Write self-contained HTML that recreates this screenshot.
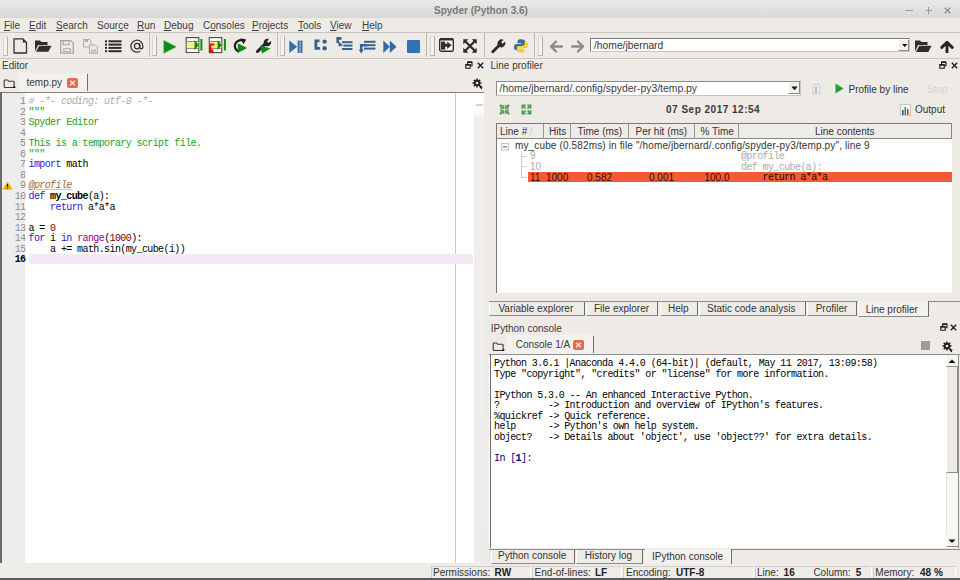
<!DOCTYPE html>
<html><head><meta charset="utf-8">
<style>
*{margin:0;padding:0;box-sizing:border-box}
html,body{width:960px;height:580px;overflow:hidden;background:#eeebe7;font-family:"Liberation Sans",sans-serif;font-size:10px;color:#3c3c3c}
.a{position:absolute;white-space:pre}
.m{font-family:"Liberation Mono",monospace;font-size:10px;letter-spacing:-0.6px}
#title{left:0;top:0;width:960px;height:18px;background:linear-gradient(#e9e9e8,#d8d8d6)}
#menubar{left:0;top:18px;width:960px;height:14px;background:#eeebe7}
.menu{top:21px;font-size:10px;color:#3c3c3c;line-height:10px}
.menu u{text-decoration:underline;text-underline-offset:1px}
#tbline{left:0;top:32px;width:960px;height:1px;background:#c9c6c2}
#toolbar{left:0;top:33px;width:960px;height:24px;background:#eeebe7}
#tbline2{left:0;top:57.6px;width:960px;height:1px;background:#c9c6c2}
.handle{width:5px;height:19.5px;border-left:1px solid #d8d6d2;border-right:1.5px solid #b0aeaa;border-bottom:1px solid #b8b6b2;border-top:1px solid #e0deda;background:#f4f3f1;top:36px}
.sep{width:1px;height:24px;background:#bcbab6;top:33px}
.th{font-size:10px;line-height:10px;color:#333;margin-top:0.7px}
.tab{top:302px;height:14px;background:#eeece9;border-right:1px solid #6e6c68;border-bottom:1px solid #8e8c88;border-left:1px solid #fff}
.tab2{top:549.5px;height:14px;background:#eeece9;border-right:1px solid #6e6c68;border-bottom:1px solid #8e8c88;border-left:1px solid #fff}
.ttx{font-size:10px;line-height:10px;color:#333;margin-top:0.8px}
.sb{top:566px;height:12px;border-left:1px solid #d2cfca;border-top:1px solid #d2cfca;border-right:1px solid #fbfaf9}
.stx{top:568px;font-size:10px;line-height:10px;color:#333}
.b{font-weight:bold;color:#222}
.ptitle{font-size:10px;color:#3c3c3c}
</style></head><body>
<div id="title" class="a"></div>
<div class="a" style="left:434px;top:6px;font-weight:bold;color:#7a7a7a;font-size:10px;line-height:10px">Spyder (Python 3.6)</div>
<div class="a" style="left:904.5px;top:10.3px;width:8.5px;height:1.2px;background:#a0a0a0"></div>
<div class="a" style="left:925.5px;top:10.2px;width:6.5px;height:1.2px;background:#9a9a9a"></div>
<div class="a" style="left:928.1px;top:7.2px;width:1.2px;height:6.5px;background:#9a9a9a"></div>
<svg class="a" style="left:943.5px;top:6.8px" width="7" height="7"><path d="M0.7 0.7L6.3 6.3M6.3 0.7L0.7 6.3" stroke="#8e8e8e" stroke-width="1.3"/></svg>

<div id="menubar" class="a"></div>
<div class="a menu" style="left:4px"><u>F</u>ile</div>
<div class="a menu" style="left:29px"><u>E</u>dit</div>
<div class="a menu" style="left:56px"><u>S</u>earch</div>
<div class="a menu" style="left:97px">Sour<u>c</u>e</div>
<div class="a menu" style="left:137px"><u>R</u>un</div>
<div class="a menu" style="left:164px"><u>D</u>ebug</div>
<div class="a menu" style="left:203px">C<u>o</u>nsoles</div>
<div class="a menu" style="left:252px"><u>P</u>rojects</div>
<div class="a menu" style="left:298px"><u>T</u>ools</div>
<div class="a menu" style="left:330px"><u>V</u>iew</div>
<div class="a menu" style="left:362px"><u>H</u>elp</div>
<div id="tbline" class="a"></div>
<div id="toolbar" class="a"></div>
<div id="tbline2" class="a"></div>



<!-- ===== TOOLBAR ICONS ===== -->
<div class="a handle" style="left:2.5px"></div>
<div class="a handle" style="left:152px"></div>
<div class="a handle" style="left:279.5px"></div>
<div class="a handle" style="left:429.5px"></div>
<div class="a handle" style="left:537.5px"></div>
<div class="a sep" style="left:149px"></div>
<div class="a sep" style="left:277px"></div>
<div class="a sep" style="left:426px"></div>
<div class="a sep" style="left:484px"></div>
<div class="a sep" style="left:534px"></div>
<!-- new file -->
<svg class="a" style="left:13px;top:38px" width="15" height="16"><path d="M1 0.8h8.8l3.7 3.7v10.5h-12.5z" fill="none" stroke="#333" stroke-width="1.3" stroke-linejoin="round"/><path d="M9.8 0.8l3.7 3.7h-3.7z" fill="#333"/></svg>
<!-- open -->
<svg class="a" style="left:35px;top:39.5px" width="17" height="12"><path d="M0 0.5h5l1.5 1.5h6v3h-9.5l-3 6.5z" fill="#2e2e2e"/><path d="M4.2 5.8h12.3l-3.2 6h-12.3z" fill="#2e2e2e"/></svg>
<!-- save (disabled) -->
<svg class="a" style="left:60px;top:39.5px" width="14" height="14"><path d="M0.7 0.7h10l2.6 2.6v9.9h-12.6z" fill="none" stroke="#a4a4a4" stroke-width="1.2"/><rect x="3" y="0.7" width="6" height="4" fill="none" stroke="#a4a4a4" stroke-width="1"/><rect x="3" y="8" width="8" height="4.5" fill="#b8b8b8"/><rect x="4.5" y="9" width="5" height="2" fill="#e8e8e8"/></svg>
<!-- save all (disabled) -->
<svg class="a" style="left:82.5px;top:38.5px" width="15" height="15"><path d="M0.5 0.5h6l1.5 1.5v6h-7.5z" fill="#eceae7" stroke="#acacac" stroke-width="1"/><rect x="2" y="1" width="3" height="2" fill="#b0b0b0"/><path d="M6.5 6h6l1.8 1.8v6.5h-7.8z" fill="#eceae7" stroke="#acacac" stroke-width="1"/><rect x="8" y="10.5" width="5" height="3" fill="#c0c0c0"/></svg>
<!-- list -->
<svg class="a" style="left:105px;top:39.5px" width="17" height="13"><g fill="#2a2a2a"><rect x="0" y="0.3" width="2" height="2"/><rect x="0" y="3.6" width="2" height="2"/><rect x="0" y="6.9" width="2" height="2"/><rect x="0" y="10.2" width="2" height="2"/><rect x="3.5" y="0.3" width="13" height="2"/><rect x="3.5" y="3.6" width="13" height="2"/><rect x="3.5" y="6.9" width="13" height="2"/><rect x="3.5" y="10.2" width="13" height="2"/></g></svg>
<!-- @ -->
<svg class="a" style="left:129.5px;top:39px" width="14" height="14"><path d="M10.2 12.2A6 6 0 1 1 12.9 7.2c0 1.6-0.7 2.6-1.8 2.6c-1 0-1.3-0.7-1.3-1.6V4.2" fill="none" stroke="#333" stroke-width="1.25"/><ellipse cx="7" cy="7.1" rx="2.6" ry="2.8" fill="none" stroke="#333" stroke-width="1.25"/></svg>
<!-- run -->
<svg class="a" style="left:163px;top:39.5px" width="14" height="14"><path d="M0.8 0.5L13.2 6.8L0.8 13.2z" fill="#118a11" stroke="#3ab53a" stroke-width="0.6"/></svg>
<!-- run cell -->
<svg class="a" style="left:185px;top:37px" width="18" height="16"><rect x="1.2" y="0.6" width="12.6" height="15" fill="#fff" stroke="#464646" stroke-width="1.1"/><rect x="1.8" y="4.6" width="11.5" height="7" fill="#f6f08a"/><path d="M1.2 4.5h12.6M1.2 11.6h12.6" stroke="#7a7050" stroke-width="0.8"/><path d="M9.5 3L13.8 8.1L9.5 13.2z" fill="#0e8e0e"/><rect x="15.4" y="2" width="2" height="11.5" fill="#0e8e0e"/></svg>
<!-- run cell advance -->
<svg class="a" style="left:208px;top:37px" width="19" height="17"><rect x="1.3" y="0.6" width="12.5" height="15" fill="#fff" stroke="#464646" stroke-width="1.1"/><rect x="1.9" y="4.6" width="11.4" height="7" fill="#f6f08a"/><path d="M1.3 4.5h12.5M1.3 11.6h12.5" stroke="#7a7050" stroke-width="0.8"/><path d="M9.5 3L13.8 8.1L9.5 13.2z" fill="#0e8e0e"/><rect x="15.9" y="2" width="2" height="11.5" fill="#0e8e0e"/><path d="M6.5 7.5h-4.3v6" fill="none" stroke="#e80c0c" stroke-width="2.2"/><circle cx="3.5" cy="14.2" r="2" fill="#e80c0c"/></svg>
<!-- rerun -->
<svg class="a" style="left:233px;top:38px" width="15" height="16"><path d="M9.8 2.6A5.6 5.6 0 1 0 5.5 13.4" fill="none" stroke="#1e1a1e" stroke-width="2.2"/><path d="M7.5 0.3L13.2 1.5L10.5 6.2z" fill="#1e1a1e"/><path d="M4.8 5.2L14.2 10L4.8 15z" fill="#0c8a0c"/></svg>
<!-- configure -->
<svg class="a" style="left:256px;top:38px" width="16" height="16"><path d="M1.5 13.5L8.5 6.5" stroke="#222" stroke-width="3" stroke-linecap="round"/><path d="M8 6.5A4 4 0 0 1 13 1L11 3.5L12.5 5L15 3A4 4 0 0 1 9.5 8z" fill="#222"/><path d="M4 7.5L14.5 10.5L6 15.5z" fill="#108a10"/></svg>
<!-- debug -->
<svg class="a" style="left:288.5px;top:39.5px" width="14" height="14"><path d="M0.3 0.5L8.2 6.8L0.3 13z" fill="#3470a8"/><rect x="8.6" y="0.5" width="2.1" height="12.5" fill="#3470a8"/><rect x="11.4" y="0.5" width="2.1" height="12.5" fill="#3470a8"/></svg>
<!-- step -->
<svg class="a" style="left:313.5px;top:39px" width="14" height="12"><path d="M5.5 1.8h-3.6v7.6h4.2" fill="none" stroke="#36628f" stroke-width="2.8"/><circle cx="10.6" cy="2.6" r="2.2" fill="#36628f"/><circle cx="10.6" cy="9.2" r="2.2" fill="#36628f"/></svg>
<!-- step into -->
<svg class="a" style="left:335.5px;top:36.5px" width="17" height="14"><path d="M5.5 1.4h-3.8v4.6" fill="none" stroke="#36628f" stroke-width="2.6"/><path d="M1.5 3.5L7.2 8.5L3 9.5z" fill="#36628f"/><rect x="6" y="4.2" width="10.5" height="2" fill="#36628f"/><rect x="7.5" y="7.6" width="9" height="2" fill="#36628f"/><rect x="6" y="11" width="10.5" height="2" fill="#36628f"/></svg>
<!-- step return -->
<svg class="a" style="left:358.5px;top:40px" width="17" height="14"><rect x="5" y="0.8" width="11.5" height="2" fill="#36628f"/><rect x="6.5" y="4.2" width="10" height="2" fill="#36628f"/><rect x="5" y="7.6" width="11.5" height="2" fill="#36628f"/><path d="M8 5.2h-5.8v5.8" fill="none" stroke="#36628f" stroke-width="2.6"/><path d="M-0.2 9.8h4.8l-2.4 3.8z" fill="#36628f"/></svg>
<!-- continue -->
<svg class="a" style="left:382.5px;top:39.5px" width="14" height="14"><path d="M0.3 0.5L6.8 6.8L0.3 13z" fill="#2f6aa8"/><path d="M6.8 0.5L13.5 6.8L6.8 13z" fill="#2f6aa8"/></svg>
<!-- stop -->
<div class="a" style="left:406.5px;top:39.8px;width:13.2px;height:13px;background:#2f73b8;border-radius:1px"></div>
<!-- maximize -->
<svg class="a" style="left:439px;top:38px" width="15" height="14"><rect x="0.7" y="0.7" width="13.6" height="12.6" rx="1.6" fill="#fff" stroke="#2e2e2e" stroke-width="1.4"/><rect x="0.7" y="0.7" width="13.6" height="1.8" fill="#2e2e2e"/><rect x="2" y="3.6" width="4.2" height="8" fill="#2e2e2e"/><path d="M5.5 5.8h2.7v-2.3l4.5 3.8l-4.5 3.8v-2.3h-2.7z" fill="#2e2e2e"/></svg>
<!-- fullscreen -->
<svg class="a" style="left:463px;top:39px" width="14" height="14"><path d="M2 2L12 12M12 2L2 12" stroke="#2a2a2a" stroke-width="2.2"/><path d="M0.3 0.3h5l-5 5z M13.7 0.3h-5l5 5z M0.3 13.7h5l-5 -5z M13.7 13.7h-5l5 -5z" fill="#2a2a2a"/></svg>
<!-- wrench -->
<svg class="a" style="left:491px;top:39px" width="15" height="15"><path d="M1.8 12.8L8 6.6" stroke="#2a2a2a" stroke-width="2.8" stroke-linecap="round"/><path d="M7 6.8A4.3 4.3 0 0 1 12.5 0.8L10.2 3.2L11.7 4.8L14.1 2.5A4.3 4.3 0 0 1 8.3 8z" fill="#2a2a2a"/></svg>
<!-- python -->
<svg class="a" style="left:514px;top:39px" width="14" height="14"><path d="M6.8 0.3c-3 0-3.3 1.3-3.3 2.4v1.6h3.5v0.6h-4.8c-1.4 0-2.2 1.2-2.2 3.2c0 2.1 0.9 3.2 2.2 3.2h1.2v-1.8c0-1.4 1.1-2.4 2.4-2.4h3.4c1.1 0 2-0.9 2-2v-2.4c0-1.2-1-2.2-2.2-2.3c-0.7-0.1-1.4-0.1-2.2-0.1z" fill="#3a6fa5"/><path d="M7.2 13.7c3 0 3.3-1.3 3.3-2.4v-1.6h-3.5v-0.6h4.8c1.4 0 2.2-1.2 2.2-3.2c0-2.1-0.9-3.2-2.2-3.2h-1.2v1.8c0 1.4-1.1 2.4-2.4 2.4h-3.4c-1.1 0-2 0.9-2 2v2.4c0 1.2 1 2.2 2.2 2.3c0.7 0.1 1.4 0.1 2.2 0.1z" fill="#f5cf3a"/></svg>
<!-- back / forward -->
<svg class="a" style="left:548.5px;top:40px" width="14" height="14"><path d="M13 6.5H3M7 1.5L2 6.5L7 11.5" fill="none" stroke="#8c8c8c" stroke-width="2.4" stroke-linecap="round" stroke-linejoin="round"/></svg>
<svg class="a" style="left:571px;top:40px" width="14" height="14"><path d="M1 6.5H11M7 1.5L12 6.5L7 11.5" fill="none" stroke="#8c8c8c" stroke-width="2.4" stroke-linecap="round" stroke-linejoin="round"/></svg>
<!-- path combo -->
<div class="a" style="left:590px;top:38.2px;width:320px;height:14px;background:#fff;border:1px solid #8c8a86;border-top:1.5px solid #7c7a76;border-left:1.5px solid #7c7a76;border-right-color:#c8c6c2;border-bottom-color:#c8c6c2"></div>
<div class="a" style="left:594px;top:41.3px;font-size:10.3px;line-height:10px;color:#333">/home/jbernard</div>
<div class="a" style="left:898px;top:39.5px;width:11px;height:11.5px;background:#f2f0ed;border-left:1px solid #fff;border-right:1px solid #8c8a86;border-bottom:1.5px solid #8c8a86"></div>
<svg class="a" style="left:901.5px;top:44px" width="6" height="4"><path d="M0 0h5.5l-2.75 3z" fill="#111"/></svg>
<svg class="a" style="left:915px;top:39.5px" width="17" height="13"><path d="M0 0.5h5l1.5 1.5h6v3h-9.5l-3 6.5z" fill="#2e2e2e"/><path d="M4.2 5.8h12.3l-3.2 6.2h-12.3z" fill="#2e2e2e"/></svg>
<svg class="a" style="left:939.5px;top:40px" width="14" height="13"><path d="M7 12.3V2.8M1.8 7.4L7 2.2L12.2 7.4" fill="none" stroke="#262626" stroke-width="2.9" stroke-linecap="round" stroke-linejoin="round"/></svg>

<!-- ===== EDITOR PANE ===== -->
<div class="a ptitle" style="left:2px;top:61px;line-height:10px">Editor</div>
<svg class="a" style="left:465px;top:61px" width="8" height="8"><path d="M2.6 4.5V1h4.4v3.8h-1.5" fill="none" stroke="#1a1a1a" stroke-width="1.1"/><rect x="2.6" y="0.5" width="4.4" height="1.5" fill="#1a1a1a"/><path d="M0.8 7.2V3.5h4.4v3.7z" fill="none" stroke="#1a1a1a" stroke-width="1.1"/><rect x="0.8" y="3" width="4.4" height="1.6" fill="#1a1a1a"/></svg>
<svg class="a" style="left:477px;top:62px" width="7" height="7"><path d="M0.8 0.8L6.2 6.2M6.2 0.8L0.8 6.2" stroke="#1a1a1a" stroke-width="1.3"/></svg>
<!-- tab bar -->
<svg class="a" style="left:3px;top:79px" width="13" height="9"><path d="M1.2 1h3.3l1.2 1.3h4.6q0.8 0 0.8 0.8v4.6q0 0.8-0.8 0.8h-8.3q-0.8 0-0.8-0.8v-5.9q0-0.8 0.8-0.8z" fill="none" stroke="#3a3a3a" stroke-width="1.1"/><rect x="10.3" y="7.3" width="2" height="1.7" fill="#111"/></svg>
<div class="a" style="left:19px;top:73px;width:68px;height:19px;background:#f3f1ee"></div>
<div class="a" style="left:87px;top:74px;width:1px;height:17px;background:#6e6e6e"></div>
<div class="a" style="left:26.5px;top:77.5px;line-height:10px;font-size:10px;color:#3a3a3a">temp.py</div>
<svg class="a" style="left:66.5px;top:77.5px" width="11" height="10"><rect x="0" y="0" width="11" height="10" rx="2" fill="#e46c4c"/><path d="M3.2 2.7L7.8 7.3M7.8 2.7L3.2 7.3" stroke="#fbe8e2" stroke-width="1.5"/></svg>
<svg class="a" style="left:472px;top:78px" width="12" height="12"><path d="M9.53 4.19L9.53 5.81L8.22 5.71L7.78 6.78L8.77 7.63L7.63 8.77L6.78 7.78L5.71 8.22L5.81 9.53L4.19 9.53L4.29 8.22L3.22 7.78L2.37 8.77L1.23 7.63L2.22 6.78L1.78 5.71L0.47 5.81L0.47 4.19L1.78 4.29L2.22 3.22L1.23 2.37L2.37 1.23L3.22 2.22L4.29 1.78L4.19 0.47L5.81 0.47L5.71 1.78L6.78 2.22L7.63 1.23L8.77 2.37L7.78 3.22L8.22 4.29z" fill="#1e1e1e"/><circle cx="5" cy="5" r="1.3" fill="#eeebe7"/><path d="M7.5 9.2L10.5 8.5L9.8 11.5z" fill="#111"/><path d="M7.5 7.5L9.5 9.5" stroke="#111" stroke-width="1.2"/></svg>
<div class="a" style="left:0;top:91.6px;width:484px;height:1.8px;background:#817f7b"></div>
<!-- editor frame -->
<div class="a" style="left:0;top:93px;width:484px;height:470px;background:#fff"></div>
<div class="a" style="left:0;top:92px;width:1.5px;height:471px;background:#6a6a6a"></div>
<div class="a" style="left:1.5px;top:93px;width:23.5px;height:470px;background:#ededed"></div>
<div class="a" style="left:455px;top:93px;width:1px;height:470px;background:#c9c9c9"></div>
<div class="a" style="left:474px;top:93px;width:10px;height:470px;background:linear-gradient(#fff 0,#fdfdfd 18px,#eeeeee 26px,#ececec 100%)"></div>
<div class="a" style="left:476px;top:104px;width:7px;height:2px;background:#efc9a4"></div>
<div class="a" style="left:28.5px;top:253.7px;width:444px;height:10px;background:#f6e9f6"></div>
<svg class="a" style="left:2px;top:180.5px" width="11" height="9"><path d="M5.5 0.5L10.5 8.5H0.5z" fill="#f0a800"/><path d="M5.5 3v3" stroke="#222" stroke-width="1.1"/><rect x="5" y="6.8" width="1" height="1" fill="#222"/></svg>
<div class="a m" id="lnum" style="left:2px;top:97.2px;width:23.5px;text-align:right;line-height:10.53px;color:#8f8f8f">1
2
3
4
5
6
7
8
9
10
11
12
13
14
15
<b style="color:#000">16</b></div>
<div class="a m" id="code" style="left:28.5px;top:97.2px;line-height:10.53px;color:#000"><i style="color:#ababab"># -*- coding: utf-8 -*-</i>
<span style="color:#1ea01e">"""</span>
<span style="color:#1ea01e">Spyder Editor</span>

<span style="color:#1ea01e">This is a temporary script file.</span>
<span style="color:#1ea01e">"""</span>
<span style="color:#1c1cd8">import</span> math

<i style="color:#9a6a30;text-decoration:underline;text-decoration-color:#f3b870">@profile</i>
<span style="color:#1c1cd8">def</span> <b>my_cube</b>(a):
    <span style="color:#1c1cd8">return</span> a*a*a

a = <span style="color:#800000">0</span>
<span style="color:#1c1cd8">for</span> i <span style="color:#1c1cd8">in</span> <span style="color:#900090">range</span>(<span style="color:#800000">1000</span>):
    a += math.sin(my_cube(i))
</div>
<!-- splitter -->


<!-- ===== LINE PROFILER PANE ===== -->
<div class="a ptitle" style="left:490.5px;top:61px;line-height:10px">Line profiler</div>
<svg class="a" style="left:939px;top:61px" width="8" height="8"><path d="M2.6 4.5V1h4.4v3.8h-1.5" fill="none" stroke="#1a1a1a" stroke-width="1.1"/><rect x="2.6" y="0.5" width="4.4" height="1.5" fill="#1a1a1a"/><path d="M0.8 7.2V3.5h4.4v3.7z" fill="none" stroke="#1a1a1a" stroke-width="1.1"/><rect x="0.8" y="3" width="4.4" height="1.6" fill="#1a1a1a"/></svg>
<svg class="a" style="left:951px;top:62px" width="7" height="7"><path d="M0.8 0.8L6.2 6.2M6.2 0.8L0.8 6.2" stroke="#1a1a1a" stroke-width="1.3"/></svg>
<!-- combo -->
<div class="a" style="left:496px;top:80.5px;width:305px;height:15px;background:#fff;border:1px solid #8c8a86;border-right-color:#c8c6c2;border-bottom-color:#c8c6c2"></div>
<div class="a" style="left:499.5px;top:83px;font-size:10.4px;line-height:12px;color:#3a3a3a">/home/jbernard/.config/spyder-py3/temp.py</div>
<div class="a" style="left:788px;top:82px;width:12px;height:12px;background:#f2f0ed;border-left:1px solid #fff;border-right:1px solid #8c8a86;border-bottom:1px solid #8c8a86"></div>
<svg class="a" style="left:791px;top:86px" width="7" height="5"><path d="M0.5 0.5h6l-3 4z" fill="#111"/><rect x="0" y="4" width="7" height="1" fill="#fff"/></svg>
<svg class="a" style="left:810px;top:82px" width="13" height="13"><path d="M4 2h5v2l1 1v7h-7v-7l1-1z" fill="#e6e9ee" stroke="#c4c8d0" stroke-width="0.8"/><path d="M6 5v6" stroke="#8aa0c8" stroke-width="1.2"/></svg>
<svg class="a" style="left:835px;top:83px" width="9" height="11"><path d="M0.5 0.5L8.5 5.5L0.5 10.5z" fill="#20a030"/></svg>
<div class="a" style="left:848.5px;top:84.7px;font-size:10px;line-height:10px;color:#333">Profile by line</div>
<div class="a" style="left:927px;top:84.7px;font-size:10px;line-height:10px;color:#d6d3ce">Stop</div>
<!-- row 2 -->
<svg class="a" style="left:498.5px;top:104px" width="11" height="11"><rect x="4.7" y="0.5" width="1.6" height="10" fill="#d2f2cc"/><rect x="0.5" y="4.7" width="10" height="1.6" fill="#d2f2cc"/><path d="M0.5 1.5L2 0.5L4.2 2.7V1.2H4.8V4.8H1.2V4.2H2.7z" fill="#5a955a" stroke="#5a955a" stroke-width="0.5" transform=""/><path d="M0.5 1.5L2 0.5L4.2 2.7V1.2H4.8V4.8H1.2V4.2H2.7z" fill="#5a955a" stroke="#5a955a" stroke-width="0.5" transform="translate(11 0) scale(-1 1)"/><path d="M0.5 1.5L2 0.5L4.2 2.7V1.2H4.8V4.8H1.2V4.2H2.7z" fill="#5a955a" stroke="#5a955a" stroke-width="0.5" transform="translate(0 11) scale(1 -1)"/><path d="M0.5 1.5L2 0.5L4.2 2.7V1.2H4.8V4.8H1.2V4.2H2.7z" fill="#5a955a" stroke="#5a955a" stroke-width="0.5" transform="translate(11 11) scale(-1 -1)"/></svg>
<svg class="a" style="left:520.5px;top:104px" width="11" height="11"><rect x="4.7" y="0.5" width="1.6" height="10" fill="#d2f2cc"/><rect x="0.5" y="4.7" width="10" height="1.6" fill="#d2f2cc"/><path d="M0.8 0.8H4.4V1.8H2.9L4.8 3.7L3.7 4.8L1.8 2.9V4.4H0.8z" fill="#5a955a" stroke="#5a955a" stroke-width="0.5" transform=""/><path d="M0.8 0.8H4.4V1.8H2.9L4.8 3.7L3.7 4.8L1.8 2.9V4.4H0.8z" fill="#5a955a" stroke="#5a955a" stroke-width="0.5" transform="translate(11 0) scale(-1 1)"/><path d="M0.8 0.8H4.4V1.8H2.9L4.8 3.7L3.7 4.8L1.8 2.9V4.4H0.8z" fill="#5a955a" stroke="#5a955a" stroke-width="0.5" transform="translate(0 11) scale(1 -1)"/><path d="M0.8 0.8H4.4V1.8H2.9L4.8 3.7L3.7 4.8L1.8 2.9V4.4H0.8z" fill="#5a955a" stroke="#5a955a" stroke-width="0.5" transform="translate(11 11) scale(-1 -1)"/></svg>
<div class="a" style="left:666px;top:105.2px;font-size:10px;line-height:10px;font-weight:bold;color:#3a3a3a;letter-spacing:0.5px">07 Sep 2017 12:54</div>
<svg class="a" style="left:900px;top:103.5px" width="11" height="12"><rect x="0.5" y="0.5" width="10" height="11" fill="#f4f4f4" stroke="#c8c8c8"/><rect x="2" y="6" width="1.6" height="5" fill="#2050c0"/><rect x="4.5" y="3" width="1.6" height="8" fill="#30a030"/><rect x="7" y="5" width="1.6" height="6" fill="#e04020"/></svg>
<div class="a" style="left:915px;top:105.2px;font-size:10px;line-height:10px;color:#333">Output</div>
<!-- table -->
<div class="a" style="left:496px;top:123px;width:456px;height:170px;background:#fff;border-left:1px solid #7a7874;border-top:1px solid #7a7874"></div>
<div class="a" style="left:497px;top:124px;width:455px;height:15px;background:#eeece9;border-bottom:1px solid #8a8884"></div>
<div class="a" style="left:951px;top:123px;width:1px;height:16px;background:#8a8884"></div>
<div class="a" style="left:543px;top:124px;width:1px;height:15px;background:#9a9894"></div>
<div class="a" style="left:570px;top:124px;width:1px;height:15px;background:#9a9894"></div>
<div class="a" style="left:627.5px;top:124px;width:1px;height:15px;background:#9a9894"></div>
<div class="a" style="left:694px;top:124px;width:1px;height:15px;background:#9a9894"></div>
<div class="a" style="left:738px;top:124px;width:1px;height:15px;background:#9a9894"></div>
<div class="a th" style="left:500px;top:126.5px">Line #</div>
<div class="a" style="left:530px;top:126.5px;color:#c8c8c8;line-height:10px">/</div>
<div class="a th" style="left:549px;top:126.5px">Hits</div>
<div class="a th" style="left:577.5px;top:126.5px">Time (ms)</div>
<div class="a th" style="left:635.5px;top:126.5px">Per hit (ms)</div>
<div class="a th" style="left:700.5px;top:126.5px">% Time</div>
<div class="a th" style="left:815px;top:126.5px">Line contents</div>
<!-- rows -->
<svg class="a" style="left:501px;top:142.5px" width="8" height="8"><rect x="0.5" y="0.5" width="7" height="6.5" fill="#f6f6f6" stroke="#c4c4c4"/><path d="M2 3.8h4" stroke="#777" stroke-width="1.2"/></svg>
<div class="a" style="left:515px;top:140.5px;font-size:10px;line-height:10px;color:#333;letter-spacing:0.14px">my_cube (0.582ms) in file "/home/jbernard/.config/spyder-py3/temp.py", line 9</div>
<div class="a" style="left:520.5px;top:151px;width:1px;height:26.5px;background:#cdcdcd"></div>
<div class="a" style="left:521px;top:155.8px;width:6px;height:1px;background:#cdcdcd"></div>
<div class="a" style="left:521px;top:166.3px;width:6px;height:1px;background:#cdcdcd"></div>
<div class="a" style="left:521px;top:176.8px;width:6px;height:1px;background:#cdcdcd"></div>
<div class="a" style="left:530px;top:151px;font-size:10px;line-height:10px;color:#a8a8a8">9</div>
<div class="a" style="left:530px;top:161.5px;font-size:10px;line-height:10px;color:#a8a8a8">10</div>
<div class="a m" style="left:741px;top:152.3px;line-height:10px;color:#aaa">@profile</div>
<div class="a m" style="left:741px;top:162.8px;line-height:10px;color:#aaa">def my_cube(a):</div>
<div class="a" style="left:527.5px;top:171.8px;width:424px;height:10.6px;background:#f25b34"></div>
<div class="a" style="left:530px;top:172.6px;font-size:10px;line-height:10px;color:#3a0a00">11</div>
<div class="a" style="left:546px;top:172.6px;font-size:10px;line-height:10px;color:#3a0a00">1000</div>
<div class="a" style="left:587px;top:172.6px;font-size:10px;line-height:10px;color:#3a0a00">0.582</div>
<div class="a" style="left:649px;top:172.6px;font-size:10px;line-height:10px;color:#3a0a00">0.001</div>
<div class="a" style="left:704.5px;top:172.6px;font-size:10px;line-height:10px;color:#3a0a00">100.0</div>
<div class="a m" style="left:741px;top:173px;line-height:10px;color:#2a0500">    return a*a*a</div>


<!-- ===== PANE TABS (south) ===== -->
<div class="a" style="left:489px;top:301px;width:471px;height:1px;background:#8e8c88"></div>
<div class="tab a" style="left:489px;width:96px"></div>
<div class="tab a" style="left:586px;width:72px"></div>
<div class="tab a" style="left:660px;width:38px"></div>
<div class="tab a" style="left:699px;width:107px"></div>
<div class="tab a" style="left:807px;width:50px"></div>
<div class="a" style="left:858px;top:301px;width:71px;height:16px;background:#f3f1ee;border-left:1px solid #fff;border-right:1px solid #6e6c68;border-bottom:1px solid #8e8c88"></div>
<div class="a ttx" style="left:498.4px;top:303px">Variable explorer</div>
<div class="a ttx" style="left:594px;top:303px">File explorer</div>
<div class="a ttx" style="left:668px;top:303px">Help</div>
<div class="a ttx" style="left:707px;top:303px">Static code analysis</div>
<div class="a ttx" style="left:815.7px;top:303px">Profiler</div>
<div class="a ttx" style="left:865.7px;top:303.8px">Line profiler</div>

<!-- ===== IPYTHON CONSOLE ===== -->
<div class="a ptitle" style="left:490.7px;top:323.5px;line-height:10px">IPython console</div>
<svg class="a" style="left:939.5px;top:322.8px" width="8" height="8"><path d="M2.6 4.5V1h4.4v3.8h-1.5" fill="none" stroke="#1a1a1a" stroke-width="1.1"/><rect x="2.6" y="0.5" width="4.4" height="1.5" fill="#1a1a1a"/><path d="M0.8 7.2V3.5h4.4v3.7z" fill="none" stroke="#1a1a1a" stroke-width="1.1"/><rect x="0.8" y="3" width="4.4" height="1.6" fill="#1a1a1a"/></svg>
<svg class="a" style="left:950px;top:324px" width="7" height="7"><path d="M0.8 0.8L6.2 6.2M6.2 0.8L0.8 6.2" stroke="#1a1a1a" stroke-width="1.3"/></svg>
<svg class="a" style="left:492px;top:341.5px" width="13" height="9"><path d="M1.2 1h3.3l1.2 1.3h4.6q0.8 0 0.8 0.8v4.6q0 0.8-0.8 0.8h-8.3q-0.8 0-0.8-0.8v-5.9q0-0.8 0.8-0.8z" fill="none" stroke="#3a3a3a" stroke-width="1.1"/><rect x="10.3" y="7.3" width="2" height="1.7" fill="#111"/></svg>
<div class="a" style="left:507px;top:335px;width:86px;height:19px;background:#f3f1ee"></div>
<div class="a" style="left:593px;top:336px;width:1px;height:17px;background:#6e6e6e"></div>
<div class="a" style="left:515.7px;top:339.5px;line-height:10px;font-size:10px;color:#3a3a3a">Console 1/A</div>
<svg class="a" style="left:573px;top:339.5px" width="11" height="10"><rect x="0" y="0" width="11" height="10" rx="2" fill="#e46c4c"/><path d="M3.2 2.7L7.8 7.3M7.8 2.7L3.2 7.3" stroke="#fbe8e2" stroke-width="1.5"/></svg>
<div class="a" style="left:921px;top:341px;width:9px;height:9px;background:#9c9c9c"></div>
<svg class="a" style="left:942px;top:340.5px" width="12" height="12"><path d="M9.53 4.19L9.53 5.81L8.22 5.71L7.78 6.78L8.77 7.63L7.63 8.77L6.78 7.78L5.71 8.22L5.81 9.53L4.19 9.53L4.29 8.22L3.22 7.78L2.37 8.77L1.23 7.63L2.22 6.78L1.78 5.71L0.47 5.81L0.47 4.19L1.78 4.29L2.22 3.22L1.23 2.37L2.37 1.23L3.22 2.22L4.29 1.78L4.19 0.47L5.81 0.47L5.71 1.78L6.78 2.22L7.63 1.23L8.77 2.37L7.78 3.22L8.22 4.29z" fill="#1e1e1e"/><circle cx="5" cy="5" r="1.3" fill="#eeebe7"/><path d="M7.5 9.2L10.5 8.5L9.8 11.5z" fill="#111"/><path d="M7.5 7.5L9.5 9.5" stroke="#111" stroke-width="1.2"/></svg>
<div class="a" style="left:489px;top:353.5px;width:471px;height:1.5px;background:#8e8c88"></div>
<div class="a" style="left:489px;top:355px;width:470px;height:193px;background:#fff"></div>
<div class="a" style="left:489.5px;top:354px;width:1.2px;height:194px;background:#6a6a6a"></div>
<div class="a" style="left:958px;top:354px;width:1px;height:194px;background:#8e8c88"></div>
<div class="a" style="left:946px;top:355px;width:12px;height:192px;background:#f6f6f5;border-left:1px solid #e4e2df"></div>
<div class="a" style="left:946px;top:367px;width:12px;height:105.5px;background:#ebe9e6;border-left:1px solid #fff;border-right:1px solid #8e8c88;border-bottom:1.5px solid #8e8c88"></div>
<div class="a" style="left:946px;top:355px;width:12px;height:12px;background:#f6f5f3;border-bottom:1px solid #8e8c88;border-left:1px solid #fff"></div>
<svg class="a" style="left:948px;top:359px" width="8" height="5"><path d="M0.5 4h7l-3.5 -3.5z" fill="#111"/></svg>
<div class="a" style="left:946px;top:535px;width:12px;height:12px;background:#f6f5f3;border-bottom:1px solid #8e8c88;border-left:1px solid #fff"></div>
<svg class="a" style="left:948px;top:539px" width="8" height="5"><path d="M0.5 0.5h7l-3.5 3.5z" fill="#111"/></svg>
<div class="a m" style="left:494px;top:359.2px;line-height:10.5px;color:#000">Python 3.6.1 |Anaconda 4.4.0 (64-bit)| (default, May 11 2017, 13:09:58)
Type "copyright", "credits" or "license" for more information.

IPython 5.3.0 -- An enhanced Interactive Python.
?         -> Introduction and overview of IPython's features.
%quickref -> Quick reference.
help      -> Python's own help system.
object?   -> Details about 'object', use 'object??' for extra details.

<span style="color:#000080">In [<b>1</b>]:</span> </div>

<!-- bottom tabs -->
<div class="a" style="left:489px;top:548.5px;width:471px;height:1px;background:#8e8c88"></div>
<div class="tab2 a" style="left:490.8px;width:84px"></div>
<div class="tab2 a" style="left:576px;width:67px"></div>
<div class="a" style="left:644.5px;top:548.5px;width:87px;height:16px;background:#f3f1ee;border-left:1px solid #fff;border-right:1px solid #6e6c68;border-bottom:1px solid #8e8c88"></div>
<div class="a ttx" style="left:498px;top:550.7px">Python console</div>
<div class="a ttx" style="left:584.8px;top:550.7px">History log</div>
<div class="a ttx" style="left:652px;top:551px">IPython console</div>

<!-- status bar sections -->

<!-- status bar -->
<div class="a" style="left:0;top:564px;width:960px;height:14px;background:#eeece9"></div>

<div class="sb a" style="left:431px;width:100px"></div>
<div class="sb a" style="left:532px;width:90px"></div>
<div class="sb a" style="left:623px;width:131px"></div>
<div class="sb a" style="left:755px;width:117px"></div>
<div class="sb a" style="left:873px;width:83px"></div>
<div class="a stx" style="left:433px">Permissions:</div><div class="a stx b" style="left:494.6px">RW</div>
<div class="a stx" style="left:534.6px">End-of-lines:</div><div class="a stx b" style="left:595px">LF</div>
<div class="a stx" style="left:626px">Encoding:</div><div class="a stx b" style="left:676px">UTF-8</div>
<div class="a stx" style="left:757px">Line:</div><div class="a stx b" style="left:783.6px">16</div>
<div class="a stx" style="left:813.4px">Column:</div><div class="a stx b" style="left:855.8px">5</div>
<div class="a stx" style="left:875.3px">Memory:</div><div class="a stx b" style="left:920px">48 %</div>
<div class="a" style="left:0;top:578px;width:960px;height:2px;background:#5a5a5a"></div>

</body></html>
